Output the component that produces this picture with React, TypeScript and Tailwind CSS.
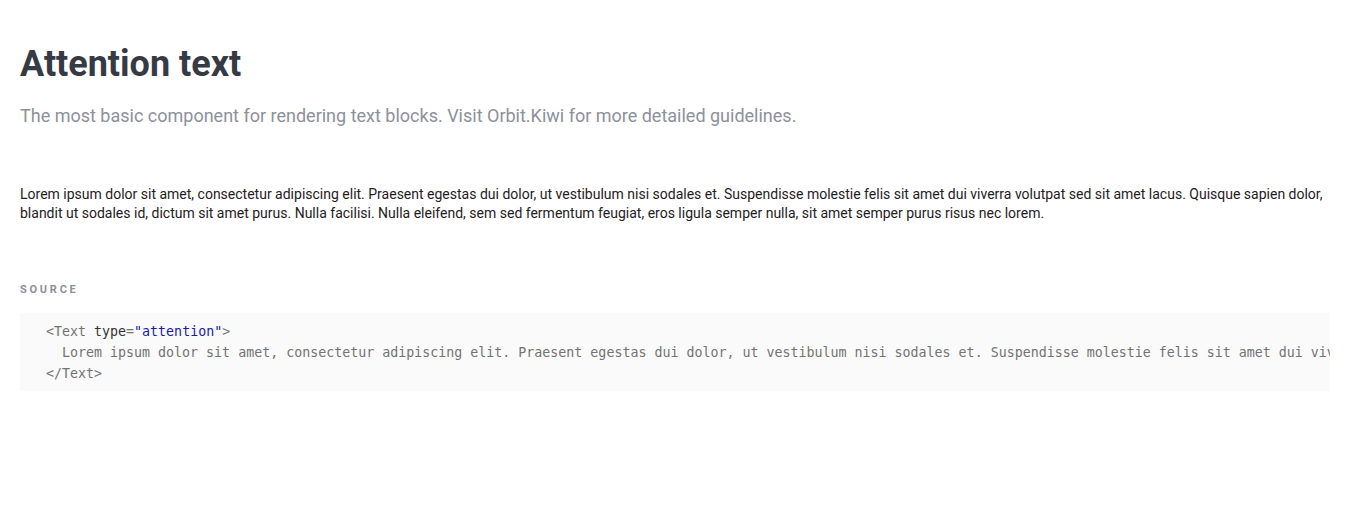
export default function App() {
  const lorem =
    "Lorem ipsum dolor sit amet, consectetur adipiscing elit. Praesent egestas dui dolor, ut vestibulum nisi sodales et. Suspendisse molestie felis sit amet dui viverra volutpat sed sit amet lacus. Quisque sapien dolor, blandit ut sodales id, dictum sit amet purus. Nulla facilisi. Nulla eleifend, sem sed fermentum feugiat, eros ligula semper nulla, sit amet semper purus risus nec lorem.";

  return (
    <div className="min-h-[512px] bg-white px-5 pt-[38px] font-['Roboto',sans-serif]">
      <h1 className="text-[36px] font-bold leading-[52px] text-[#353a44]">Attention text</h1>
      <p className="mt-[14px] text-[18px] leading-6 text-[#8c919b]">
        The most basic component for rendering text blocks. Visit Orbit.Kiwi for more detailed guidelines.
      </p>

      <p className="mt-[57px] text-[14px] leading-[19px] text-[#1f2023]">{lorem}</p>

      <div className="mt-[59px] text-[11px] font-bold uppercase tracking-[0.25em] text-[#8c919b]">Source</div>

      <pre className="mt-[14px] overflow-hidden bg-[#fafafa] px-[26px] pt-2 pb-[7px] font-['DejaVu_Sans_Mono',monospace] text-[13.3px] leading-[21px] text-[#737373]">
        <div>
          {"<Text "}
          <span className="text-[#333333]">type</span>
          {"="}
          <span className="text-[#1a1aa6]">"attention"</span>
          {">"}
        </div>
        <div className="whitespace-pre">{"  " + lorem}</div>
        <div>{"</Text>"}</div>
      </pre>
    </div>
  );
}
